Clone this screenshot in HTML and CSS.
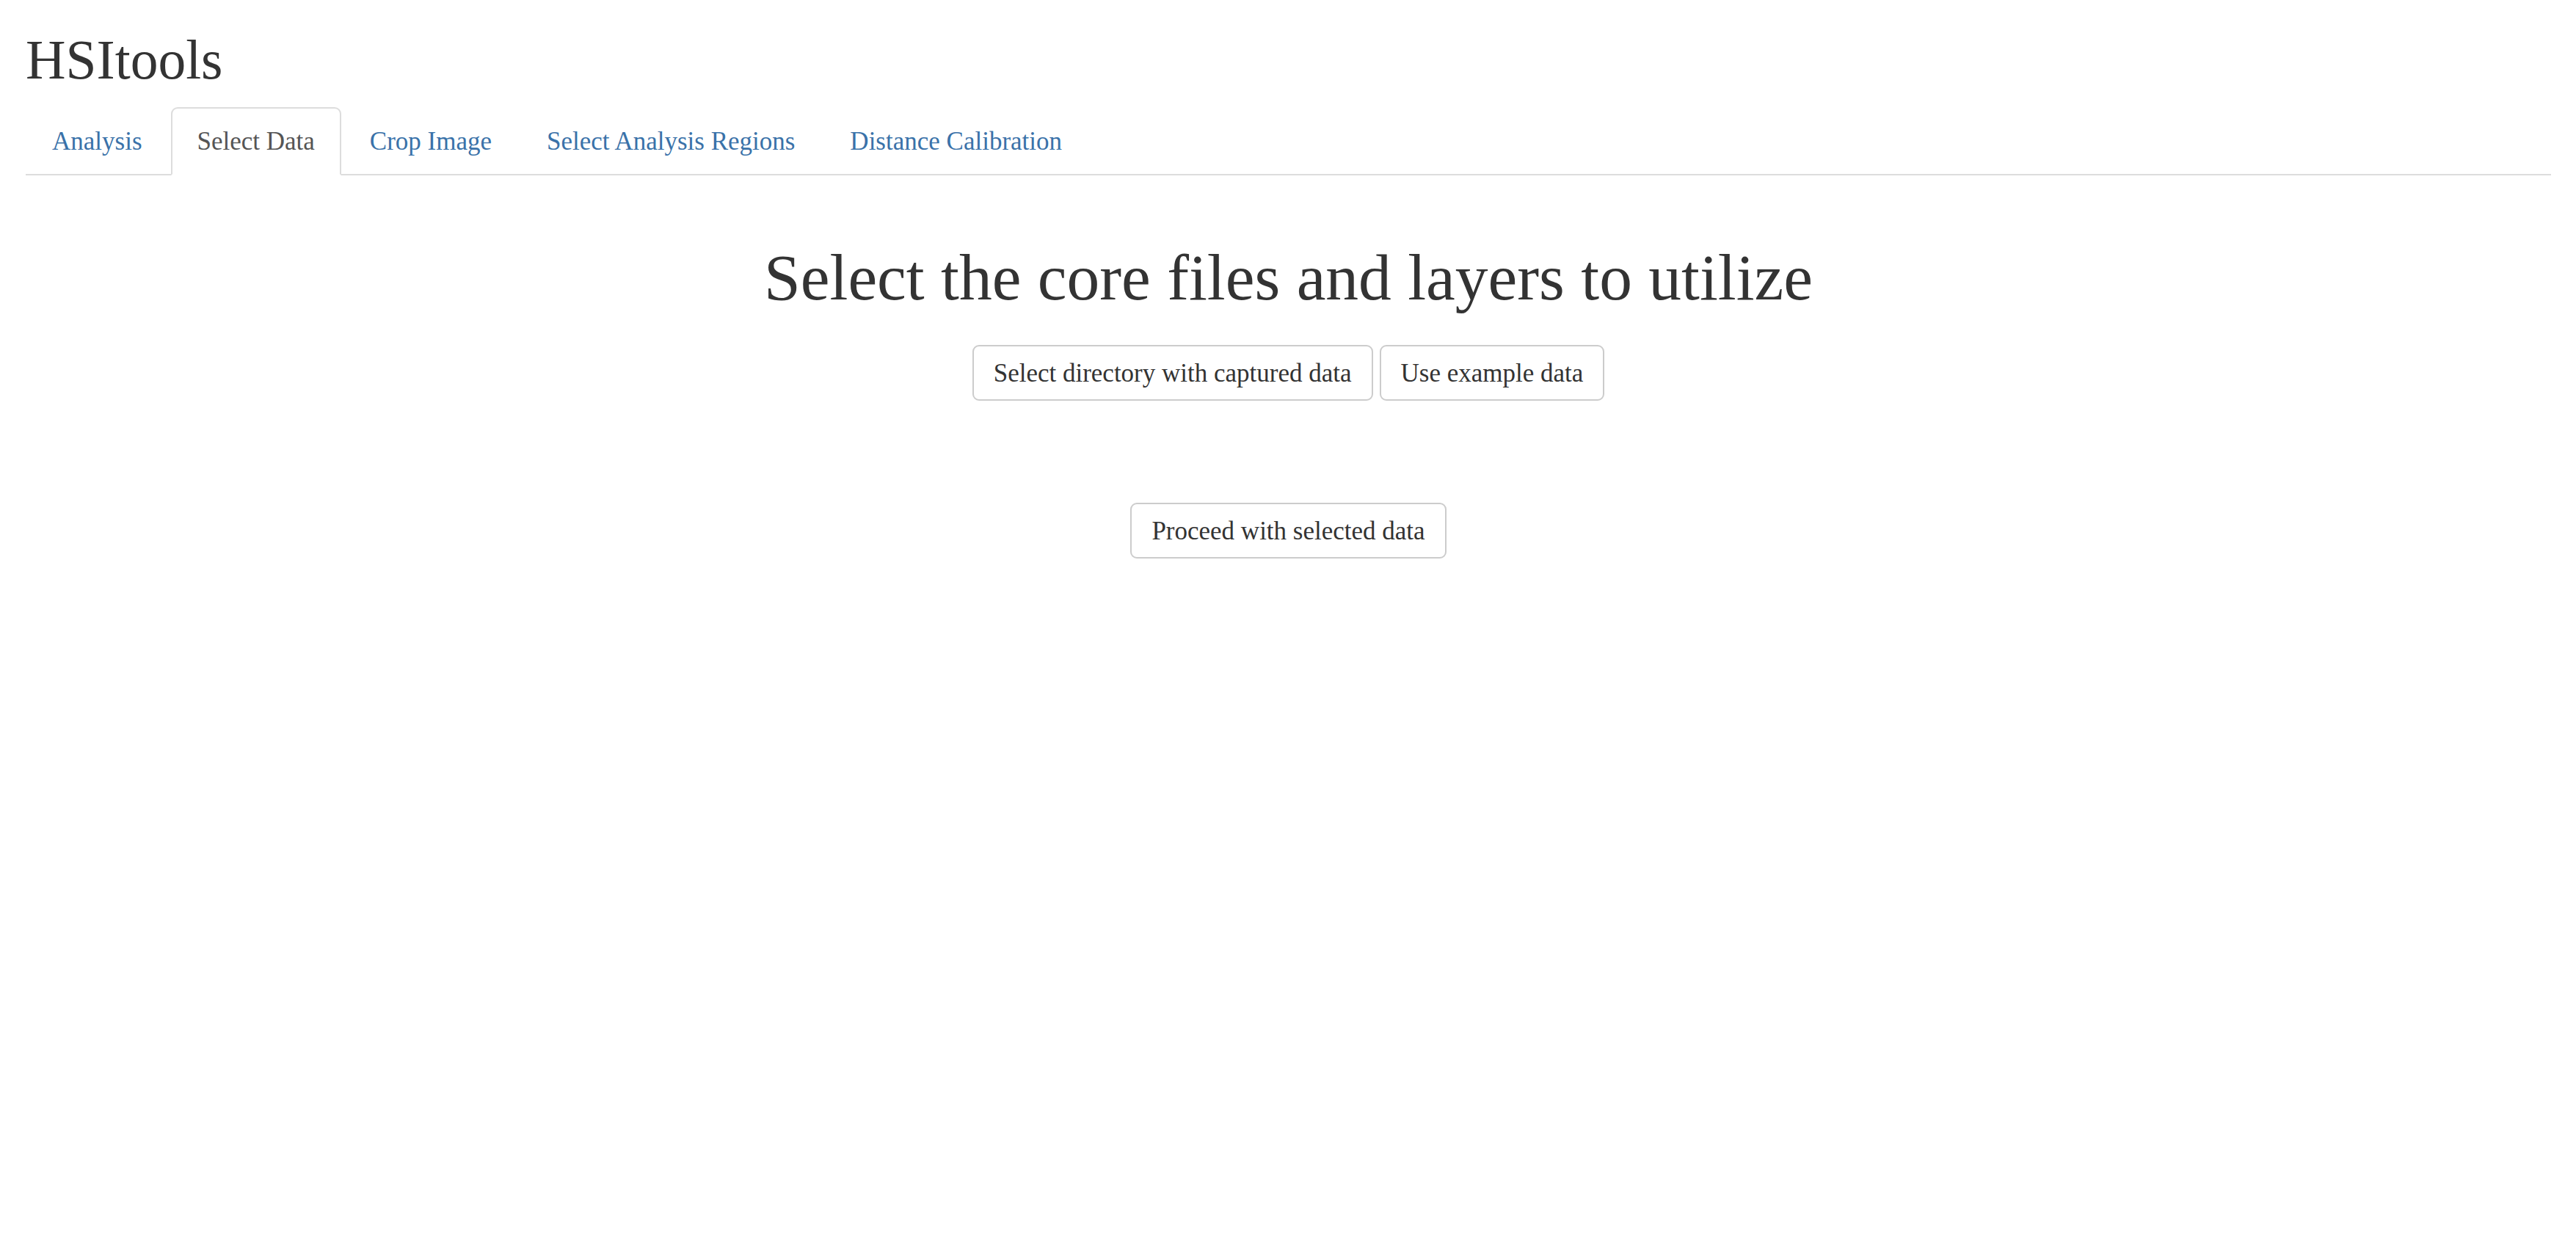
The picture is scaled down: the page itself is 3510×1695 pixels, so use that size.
FILE: index.html
```html
<!DOCTYPE html>
<html lang="en">
<head>
<meta charset="utf-8">
<title>HSItools</title>
<link rel="stylesheet" href="styles.css">
</head>
<body>
<div class="page">
  <h2 class="app-title">HSItools</h2>
  <ul class="tabs">
    <li class="tab"><a href="#">Analysis</a></li>
    <li class="tab active"><a href="#">Select Data</a></li>
    <li class="tab"><a href="#">Crop Image</a></li>
    <li class="tab"><a href="#">Select Analysis Regions</a></li>
    <li class="tab"><a href="#">Distance Calibration</a></li>
  </ul>
  <div class="pane">
    <h1 class="pane-title">Select the core files and layers to utilize</h1>
    <div class="btn-row">
      <button class="btn" type="button">Select directory with captured data</button>
      <button class="btn" type="button">Use example data</button>
    </div>
    <div class="btn-row proceed-row">
      <button class="btn" type="button">Proceed with selected data</button>
    </div>
  </div>
</div>
</body>
</html>
```
FILE: styles.css
```css
html, body {
  margin: 0;
  padding: 0;
  background: #ffffff;
}

body {
  font-family: "Liberation Serif", "Times New Roman", serif;
  font-size: 35px;
  line-height: 45px;
  color: #333333;
}

.page {
  padding: 0 34px 0 35px;
}

.app-title {
  margin: 41px 0 23px 0;
  font-size: 75.5px;
  line-height: 82px;
  font-weight: normal;
  color: #333333;
}

.tabs {
  list-style: none;
  margin: 0;
  padding: 0;
  display: flex;
  border-bottom: 2px solid #dddddd;
}

.tab {
  margin-bottom: -2px;
}

.tab a {
  display: block;
  margin-right: 3px;
  padding: 22px 34px;
  line-height: 45px;
  border: 2px solid transparent;
  border-radius: 9px 9px 0 0;
  color: #3a72a9;
  text-decoration: none;
}

.tab.active a {
  color: #555555;
  background: #ffffff;
  border-color: #dddddd #dddddd transparent #dddddd;
}

.pane {
  display: flex;
  flex-direction: column;
  align-items: center;
}

.pane-title {
  margin: 90px 0 43px 0;
  font-size: 89.5px;
  line-height: 98px;
  font-weight: normal;
  color: #333333;
  text-align: center;
}

.btn-row {
  display: flex;
  justify-content: center;
  gap: 9px;
}

.proceed-row {
  margin-top: 139px;
}

.btn {
  font-family: inherit;
  font-size: 35px;
  line-height: 45px;
  color: #333333;
  background: #ffffff;
  border: 2px solid #cccccc;
  border-radius: 9px;
  padding: 13.5px 27px;
  margin: 0;
  cursor: pointer;
}
```
